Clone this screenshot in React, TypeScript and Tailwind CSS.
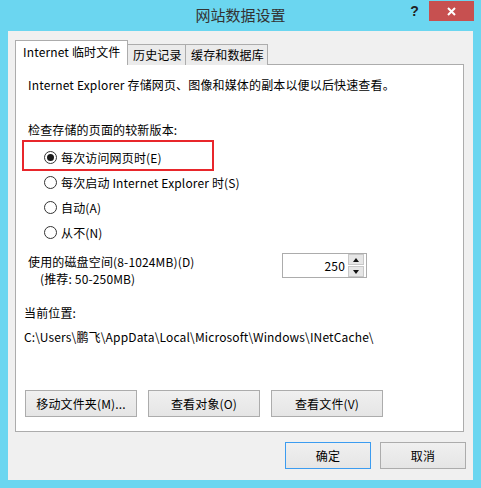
import React from "react";

const Radio = ({ checked, label }: { checked?: boolean; label: string }) => (
  <div className="flex items-center h-[25px] ml-[20px] gap-[4px]">
    <span className="w-[13px] h-[13px] rounded-full border border-[#333] bg-white flex items-center justify-center">
      {checked && <span className="w-[7px] h-[7px] rounded-full bg-[#1a1a1a]" />}
    </span>
    <span className="leading-[16px]">{label}</span>
  </div>
);

const Btn = ({ label, w, primary }: { label: string; w: string; primary?: boolean }) => (
  <button
    className={`${w} h-[27px] border ${
      primary ? "border-[#3c9cf0]" : "border-[#acacac]"
    } bg-gradient-to-b from-[#f0f0f0] to-[#e5e5e5] text-black leading-[16px]`}
  >
    {label}
  </button>
);

const App = () => {
  return (
    <div className="w-[481px] h-[488px] bg-[#6bd6f0] flex flex-col font-['Noto_Sans_CJK_SC',sans-serif] text-[12px] tracking-[0.15px] text-black">
      {/* barre de titre */}
      <div className="h-[31px] grid grid-cols-[1fr_auto_1fr]">
        <div />
        <div className="text-[15px] leading-[30px] tracking-normal text-[#333]">网站数据设置</div>
        <div className="flex justify-end items-start">
          <span className="mt-[3px] mr-[10px] text-[14px] font-bold leading-[16px] text-[#222] font-['Liberation_Sans',sans-serif]">
            ?
          </span>
          <div className="mt-[1px] mr-[7px] w-[45px] h-[20px] bg-[#c75050] flex items-center justify-center">
            <svg width="9" height="9" viewBox="0 0 9 9">
              <path d="M1 1L8 8M8 1L1 8" stroke="white" strokeWidth="2" />
            </svg>
          </div>
        </div>
      </div>

      {/* zone client */}
      <div className="mx-[8px] h-[449px] bg-[#f0f0f0] pt-[9px] pl-[7px] pr-[9px] flex flex-col">
        {/* onglets */}
        <div className="relative z-10 flex items-end h-[25px]">
          <div className="w-[113px] h-[25px] border border-b-0 border-[#acacac] bg-white pl-[7px] pt-[3px] leading-[16px]">
            Internet 临时文件
          </div>
          <div className="w-[58px] h-[21px] border border-b-0 border-l-0 border-[#acacac] bg-[#ebebeb] pl-[5px] pt-[2px] leading-[16px]">
            历史记录
          </div>
          <div className="w-[82px] h-[21px] border border-b-0 border-l-0 border-[#acacac] bg-[#ebebeb] pl-[5px] pt-[2px] leading-[16px]">
            缓存和数据库
          </div>
        </div>

        {/* panneau */}
        <div className="relative mt-[-1px] h-[368px] border border-[#acacac] bg-white pl-[8px] pt-[12px] flex flex-col">
          <div className="absolute left-[6px] top-[75px] w-[192px] h-[31px] border-2 border-[#e8262b]" />

          <div className="ml-[4px] leading-[16px]">Internet Explorer 存储网页、图像和媒体的副本以便以后快速查看。</div>
          <div className="ml-[4px] mt-[29px] leading-[16px]">检查存储的页面的较新版本:</div>

          <div className="mt-[7px]">
            <Radio checked label="每次访问网页时(E)" />
            <Radio label="每次启动 Internet Explorer 时(S)" />
            <Radio label="自动(A)" />
            <Radio label="从不(N)" />
          </div>

          <div className="mt-[8px] flex items-start">
            <div className="w-[254px] ml-[4px] leading-[17px]">
              <div>使用的磁盘空间(8-1024MB)(D)</div>
              <div className="pl-[12px]">(推荐: 50-250MB)</div>
            </div>
            <div className="w-[85px] h-[25px] border border-[#acacac] bg-white flex items-center pr-[2px]">
              <div className="flex-1 text-right pr-[3px] leading-[16px]">250</div>
              <div className="w-[16px] flex flex-col gap-[1px]">
                <div className="h-[11px] border border-[#c8c8c8] bg-[#e6e6e6] flex items-center justify-center">
                  <svg width="6" height="4" viewBox="0 0 6 4">
                    <path d="M0 4L3 0L6 4Z" fill="#111" />
                  </svg>
                </div>
                <div className="h-[11px] border border-[#c8c8c8] bg-[#e6e6e6] flex items-center justify-center">
                  <svg width="6" height="4" viewBox="0 0 6 4">
                    <path d="M0 0L6 0L3 4Z" fill="#111" />
                  </svg>
                </div>
              </div>
            </div>
          </div>

          <div className="mt-[18px] leading-[16px]">当前位置:</div>
          <div className="mt-[8px] leading-[16px]">C:\Users\鹏飞\AppData\Local\Microsoft\Windows\INetCache\</div>

          <div className="mt-[45px] ml-[1px] flex gap-[11px]">
            <Btn label="移动文件夹(M)..." w="w-[112px]" />
            <Btn label="查看对象(O)" w="w-[112px]" />
            <Btn label="查看文件(V)" w="w-[112px]" />
          </div>
        </div>

        {/* boutons du bas */}
        <div className="mt-[10px] mr-[-2px] flex justify-end gap-[9px]">
          <Btn label="确定" w="w-[86px]" primary />
          <Btn label="取消" w="w-[86px]" />
        </div>
      </div>
    </div>
  );
};

export default App;
